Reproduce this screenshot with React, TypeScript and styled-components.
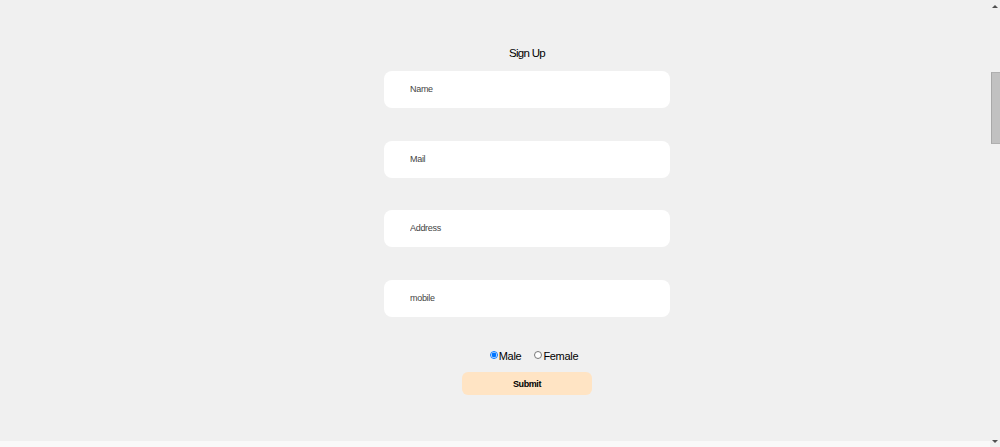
import React from "react";
import styled, { createGlobalStyle } from "styled-components";

const Global = createGlobalStyle`
  body {
    margin: 0;
    background: #f0f0f0;
    font-family: "Liberation Sans", Arial, sans-serif;
  }
`;

const Page = styled.div`
  display: flex;
  height: 447px;
  overflow: hidden;
`;

const Main = styled.main`
  flex: 1;
  display: flex;
  flex-direction: column;
`;

const Content = styled.div`
  flex: 1;
  display: flex;
  justify-content: center;
  padding: 46px 0 0 64px;
`;

const BottomEdge = styled.div`
  height: 6px;
  background: #f9f9f9;
`;

const ScrollBar = styled.div`
  width: 10px;
  display: flex;
  flex-direction: column;
  align-items: center;
  background: #f1f1f1;
`;

const Arrow = styled.div<{ $down?: boolean }>`
  height: 12px;
  display: flex;
  align-items: center;
  justify-content: center;
  &::before {
    content: "";
    border-left: 3px solid transparent;
    border-right: 3px solid transparent;
    ${(p) =>
      p.$down ? "border-top: 3px solid #505050;" : "border-bottom: 3px solid #505050;"}
  }
`;

const Track = styled.div`
  flex: 1;
  width: 100%;
  padding-top: 60px;
  box-sizing: border-box;
`;

const Thumb = styled.div`
  height: 72px;
  margin-left: 1px;
  background: #c1c1c1;
  border-left: 1px solid #a8a8a8;
  border-top: 1px solid #b0b0b0;
  border-bottom: 1px solid #b0b0b0;
  box-sizing: border-box;
`;

const Form = styled.form`
  width: 286px;
  display: flex;
  flex-direction: column;
  align-items: center;
`;

const Title = styled.h2`
  margin: 0 0 10px;
  font-size: 11.5px;
  line-height: 15px;
  letter-spacing: -0.7px;
  font-weight: 400;
  color: #000;
`;

const Fields = styled.div`
  width: 100%;
  display: flex;
  flex-direction: column;
  gap: 32.7px;
`;

const Input = styled.input`
  width: 100%;
  height: 37px;
  box-sizing: border-box;
  border: none;
  outline: none;
  border-radius: 8px;
  background: #fff;
  padding: 0 0 1px 26px;
  font-family: "Liberation Sans", Arial, sans-serif;
  font-size: 9px;
  letter-spacing: -0.3px;
  color: #333;
  &::placeholder {
    color: #444;
  }
`;

const RadioRow = styled.div`
  display: flex;
  align-items: center;
  gap: 13px;
  margin-top: 32px;
  margin-left: 14px;
`;

const RadioLabel = styled.label`
  display: flex;
  align-items: center;
  font-size: 11px;
  line-height: 14px;
  letter-spacing: -0.3px;
  color: #000;
`;

const Radio = styled.input`
  width: 8px;
  height: 8px;
  margin: 0 1px 2px 0;
`;

const Submit = styled.button`
  margin-top: 9px;
  width: 130px;
  height: 23px;
  border: none;
  border-radius: 6px;
  background: #ffe4c4;
  font-family: "Liberation Sans", Arial, sans-serif;
  font-size: 9px;
  letter-spacing: -0.4px;
  font-weight: 700;
  color: #000;
`;

export default function App() {
  return (
    <>
      <Global />
      <Page>
        <Main>
          <Content>
            <Form onSubmit={(e) => e.preventDefault()}>
              <Title>Sign Up</Title>
              <Fields>
                <Input placeholder="Name" />
                <Input placeholder="Mail" />
                <Input placeholder="Address" />
                <Input placeholder="mobile" />
              </Fields>
              <RadioRow>
                <RadioLabel>
                  <Radio type="radio" name="gender" defaultChecked />
                  Male
                </RadioLabel>
                <RadioLabel>
                  <Radio type="radio" name="gender" />
                  Female
                </RadioLabel>
              </RadioRow>
              <Submit type="submit">Submit</Submit>
            </Form>
          </Content>
          <BottomEdge />
        </Main>
        <ScrollBar>
          <Arrow />
          <Track>
            <Thumb />
          </Track>
          <Arrow $down />
        </ScrollBar>
      </Page>
    </>
  );
}
